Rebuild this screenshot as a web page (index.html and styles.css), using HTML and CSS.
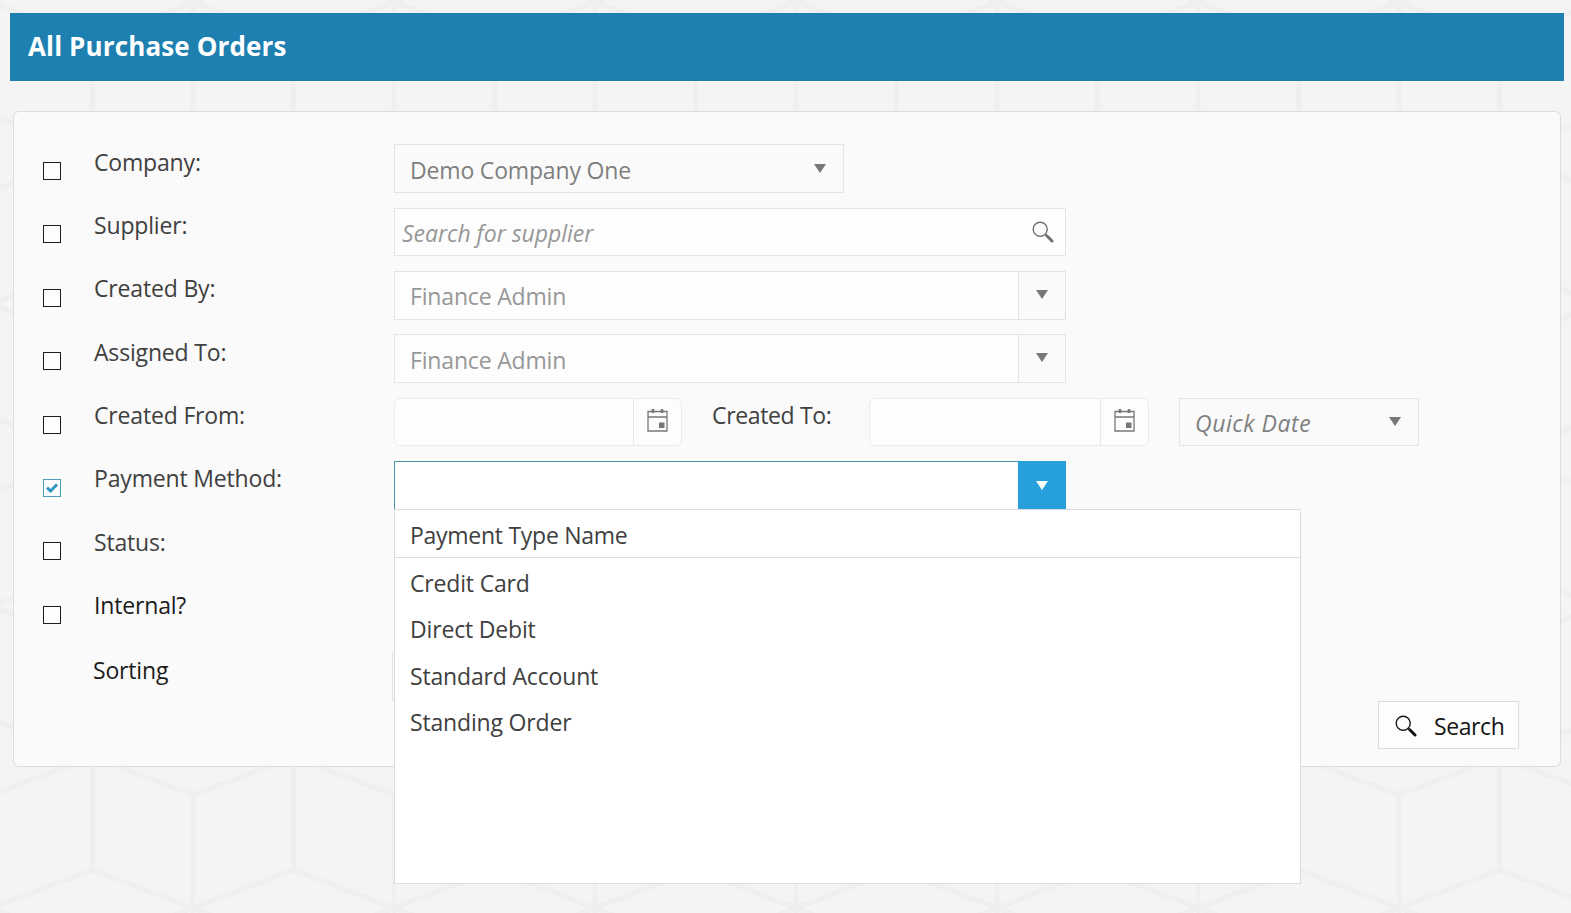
FILE: index.html
```html
<!DOCTYPE html>
<html lang="en">
<head>
<meta charset="utf-8">
<title>All Purchase Orders</title>
<link rel="stylesheet" href="styles.css">
</head>
<body>
<svg class="backdrop" aria-hidden="true">
  <defs>
    <pattern id="cubes" width="201" height="302" patternUnits="userSpaceOnUse" patternTransform="translate(-8 2)">
      <path d="M0 0L100.5 38L201 0M0 113L100.5 151L201 113M0 189L100.5 151L201 189M0 302L100.5 264L201 302M0 0V113M0 189V302M201 0V113M201 189V302M100.5 38V264" fill="none" stroke="#efefef" stroke-width="5"/>
    </pattern>
  </defs>
  <rect width="100%" height="100%" fill="url(#cubes)"/>
</svg>
<svg class="defs" aria-hidden="true">
  <symbol id="lens" viewBox="0 0 22 22"><circle cx="8.2" cy="8.2" r="7" fill="none" stroke="currentColor" stroke-width="1.4"/><path d="M13.2 13.2L15 15" stroke="currentColor" stroke-width="1.6"/><path d="M14.8 14.8L20 20" stroke="currentColor" stroke-width="3" stroke-linecap="round"/></symbol>
  <symbol id="arrow" viewBox="0 0 12 9"><path d="M0 0H12L6 9Z" fill="currentColor"/></symbol>
  <symbol id="calendar" viewBox="0 0 21 24"><path d="M1 3.5H20V23H1ZM1 9H20" fill="none" stroke="currentColor" stroke-width="1.3"/><path d="M6 1V5M15 1V5" stroke="currentColor" stroke-width="2.6"/><path d="M12 14.5H17.5V20H12Z" fill="currentColor"/></symbol>
</svg>
<header class="titlebar"><h1 class="title">All Purchase Orders</h1></header>
<main class="panel">
  <div class="row"><span class="check"></span><span class="label">Company:</span>
    <div class="select company"><span>Demo Company One</span><svg class="arrow"><use href="#arrow"/></svg></div></div>
  <div class="row"><span class="check"></span><span class="label">Supplier:</span>
    <div class="box supplier"><span class="placeholder">Search for supplier</span><svg class="lens"><use href="#lens"/></svg></div></div>
  <div class="row"><span class="check"></span><span class="label">Created By:</span>
    <div class="box combo"><span class="value">Finance Admin</span><span class="drop"><svg class="arrow"><use href="#arrow"/></svg></span></div></div>
  <div class="row"><span class="check"></span><span class="label">Assigned To:</span>
    <div class="box combo"><span class="value">Finance Admin</span><span class="drop"><svg class="arrow"><use href="#arrow"/></svg></span></div></div>
  <div class="row"><span class="check"></span><span class="label">Created From:</span>
    <div class="dates">
      <div class="date from"><span class="pick"><svg class="calendar"><use href="#calendar"/></svg></span></div>
      <span class="label to-label">Created To:</span>
      <div class="date to"><span class="pick"><svg class="calendar"><use href="#calendar"/></svg></span></div>
      <div class="select quick"><span>Quick Date</span><svg class="arrow"><use href="#arrow"/></svg></div>
    </div></div>
  <div class="row"><span class="check checked"><svg class="tick" viewBox="0 0 12 10"><path d="M1 4.6L4.6 8L11 1.4" fill="none" stroke="currentColor" stroke-width="2.9"/></svg></span><span class="label">Payment Method:</span>
    <div class="box combo active"><span class="value"></span><span class="drop"><svg class="arrow"><use href="#arrow"/></svg></span>
      <div class="menu">
        <div class="menu-head">Payment Type Name</div>
        <ul class="options">
          <li>Credit Card</li>
          <li>Direct Debit</li>
          <li>Standard Account</li>
          <li>Standing Order</li>
        </ul>
      </div>
    </div></div>
  <div class="row"><span class="check"></span><span class="label">Status:</span></div>
  <div class="row"><span class="check"></span><span class="label strong">Internal?</span></div>
  <div class="row sort"><span></span><span class="label strong">Sorting</span><div class="select sorting"></div></div>
  <button class="search"><svg class="lens"><use href="#lens"/></svg><span>Search</span></button>
</main>
</body>
</html>
```
FILE: styles.css
```css
* { box-sizing: border-box; }
body {
  margin: 0;
  height: 913px;
  overflow: hidden;
  padding: 13px 7px 0 10px;
  background: #f4f4f4;
  font-family: "Open Sans", "Noto Sans", sans-serif;
  font-size: 23px;
  line-height: 32px;
  letter-spacing: -0.17px;
  color: #404040;
}
.backdrop { position: absolute; inset: 0; width: 100%; height: 100%; z-index: -1; }
.defs { position: absolute; width: 0; height: 0; }
.titlebar { height: 68px; padding: 17px 18px; background: #1e80b0; }
.title { margin: 0; font-size: 26px; line-height: 32px; font-weight: 700; letter-spacing: 0.13px; color: #fff; }
.panel {
  position: relative;
  height: 656px;
  margin: 30px 3px 0;
  padding: 32px 0 0 28px;
  background: #fafafa;
  border: 1px solid #dcdcdc;
  border-radius: 6px;
}
.row { display: grid; grid-template-columns: 52px 300px auto; justify-content: start; height: 63.4px; }
.label { padding-top: 1.5px; white-space: nowrap; }
.strong { color: #1c1c1c; }
.check { width: 18px; height: 18px; margin: 18px 0 0 1px; border: 1px solid #1d1d1d; background: #fdfdfd; }
.checked { display: flex; align-items: center; justify-content: center; border-color: #4d9dbd; color: #2f93c2; }
.tick { width: 12px; height: 10px; }
.select, .box { display: flex; align-items: center; height: 49px; border: 1px solid #e4e4e4; }
.select { justify-content: space-between; padding: 3px 17px 0 15px; color: #7f7f7f; }
.arrow { width: 12px; height: 9px; color: #777; flex: none; transform: translateY(-1px); }
.select .arrow { transform: translateY(-2px); }
.company { width: 450px; }
.box { width: 672px; background: #fdfdfd; color: #979797; }
.lens { width: 22px; height: 22px; flex: none; }
.supplier { height: 48px; margin-top: 1px; justify-content: space-between; padding: 0 11px 0 7px; }
.supplier .lens { color: #707070; }
.placeholder { font-style: italic; padding-top: 2px; letter-spacing: -0.03px; }
.combo { position: relative; }
.value { flex: 1; padding: 2px 0 0 15px; }
.drop { display: flex; align-items: center; justify-content: center; width: 47px; height: 100%; background: #fafafa; border-left: 1px solid #e2e2e2; }
.active { background: #fff; border-color: #4a93a6; border-right: 0; border-bottom: 0; }
.active .drop { width: 48px; height: 49px; margin-top: -1px; background: #269fdb; border: 0; }
.active .arrow { color: #fff; transform: none; }
.dates { display: flex; }
.date { display: flex; justify-content: flex-end; height: 48px; border: 1px solid #ebebeb; border-radius: 6px; background: #fdfdfd; }
.from { width: 288px; }
.to { width: 280px; }
.to-label { width: 187px; padding-left: 30px; letter-spacing: -0.35px; }
.pick { display: flex; align-items: center; justify-content: center; width: 48px; border-left: 1px solid #e8e8e8; }
.calendar { width: 21px; height: 24px; color: #777; transform: translate(0, -2px); }
.quick { width: 240px; height: 48px; margin-left: 30px; font-style: italic; letter-spacing: 0.55px; }
.quick .arrow { transform: translateY(-2px); }
.menu { position: absolute; left: -1px; top: 47px; width: 907px; height: 375px; z-index: 2; background: #fff; border: 1px solid #dcdcdc; color: #404040; }
.menu-head { height: 48px; padding: 9px 15px 0; border-bottom: 1px solid #dcdcdc; letter-spacing: -0.27px; }
.options { margin: 0; padding: 2px 0 0 15px; list-style: none; }
.options li { height: 46.5px; padding-top: 7px; }
.sort .label { margin: 1px 0 0 -1px; }
.sorting { width: 400px; margin: 1px 0 0 -2px; }
.search {
  position: absolute;
  right: 41px;
  bottom: 17px;
  display: flex;
  align-items: center;
  gap: 17px;
  width: 141px;
  height: 48px;
  padding: 2px 0 0 16px;
  background: #fdfdfd;
  border: 1px solid #dcdcdc;
  font: inherit;
  letter-spacing: -0.4px;
  color: #161616;
}
```
